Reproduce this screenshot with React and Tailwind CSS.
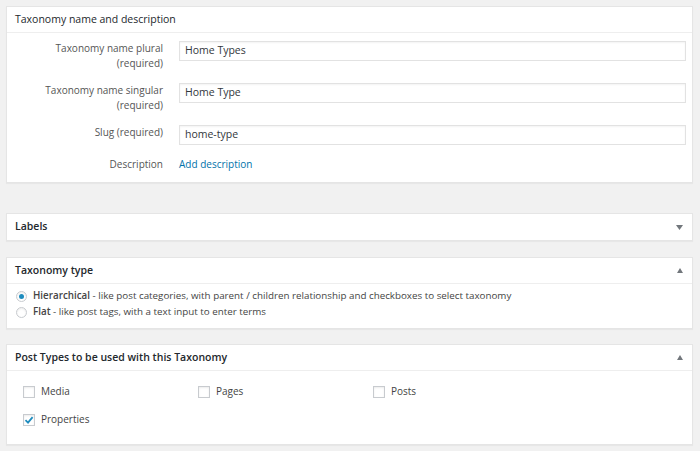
import React from "react";

const font = { fontFamily: '"Open Sans", "Noto Sans", sans-serif' };

function Panel({ title, bold = true, arrow, children, className = "" }) {
  return (
    <div className={`bg-white border border-[#e5e5e5] shadow-[0_1px_1px_rgba(0,0,0,0.04)] ${className}`}>
      <div className={`h-[26px] flex items-center justify-between pl-[8px] pr-[9px] ${children ? "border-b border-[#eeeeee]" : ""}`}>
        <span className={`text-[10.5px] text-[#23282d] ${bold ? "font-semibold" : ""}`}>{title}</span>
        {arrow === "down" && (
          <svg width="7" height="5" viewBox="0 0 7 5"><path d="M0 0h7L3.5 5z" fill="#72777c" /></svg>
        )}
        {arrow === "up" && (
          <svg width="6" height="5" viewBox="0 0 6 5"><path d="M0 5h6L3 0z" fill="#72777c" /></svg>
        )}
      </div>
      {children}
    </div>
  );
}

function Row({ label, value, mt }) {
  return (
    <div className={`flex items-start ${mt}`}>
      <div className="w-[156px] text-right text-[10px] leading-[15px] text-[#555]">{label}</div>
      <div className="ml-[16px] flex-1 h-[20px] border border-[#e2e2e2] shadow-[inset_0_1px_2px_rgba(0,0,0,0.05)] flex items-center pl-[5px] text-[10.5px] text-[#32373c]">
        {value}
      </div>
    </div>
  );
}

function Check({ label, checked }) {
  return (
    <div className="flex items-center gap-[6px]">
      <div className="w-[12px] h-[12px] border border-[#c8cbcf] bg-white shadow-[inset_0_1px_2px_rgba(0,0,0,0.08)] flex items-center justify-center">
        {checked && (
          <svg width="10" height="10" viewBox="0 0 10 10">
            <path d="M1.5 5.2 L4 7.6 L8.6 2.2" stroke="#1e8cbe" strokeWidth="1.8" fill="none" />
          </svg>
        )}
      </div>
      <span className="text-[10px] text-[#444]">{label}</span>
    </div>
  );
}

function Radio({ checked, strong, rest }) {
  return (
    <div className="flex items-center h-[16px]">
      <div className="w-[11px] h-[11px] rounded-full border border-[#c8cbcf] bg-white shadow-[inset_0_1px_2px_rgba(0,0,0,0.08)] flex items-center justify-center">
        {checked && <div className="w-[5px] h-[5px] rounded-full bg-[#1e8cbe]" />}
      </div>
      <span className="ml-[6px] text-[9.8px] text-[#444]">
        <span className="font-semibold">{strong}</span>
        {rest}
      </span>
    </div>
  );
}

export default function App() {
  return (
    <div style={font} className="w-[700px] h-[451px] bg-[#f1f1f1] pt-[6px] pl-[6px] pr-[7px] overflow-hidden">
      <Panel title="Taxonomy name and description" bold={false}>
        <div className="pt-[8px] pb-[10px] pr-[6px]">
          <Row label={<>Taxonomy name plural<br />(required)</>} value="Home Types" />
          <Row label={<>Taxonomy name singular<br />(required)</>} value="Home Type" mt="mt-[12px]" />
          <Row label="Slug (required)" value="home-type" mt="mt-[12px]" />
          <div className="flex items-start mt-[12px]">
            <div className="w-[156px] text-right text-[10px] leading-[15px] text-[#555]">Description</div>
            <a className="ml-[16px] text-[10px] leading-[15px] text-[#0073aa]">Add description</a>
          </div>
        </div>
      </Panel>

      <Panel title="Labels" arrow="down" className="mt-[30px]" />

      <Panel title="Taxonomy type" arrow="up" className="mt-[16px]">
        <div className="pt-[4px] pb-[8px] pl-[9px]">
          <Radio checked strong="Hierarchical" rest=" - like post categories, with parent / children relationship and checkboxes to select taxonomy" />
          <Radio strong="Flat" rest=" - like post tags, with a text input to enter terms" />
        </div>
      </Panel>

      <Panel title="Post Types to be used with this Taxonomy" arrow="up" className="mt-[15px]">
        <div className="pt-[13px] pb-[17px] pl-[16px] grid grid-cols-[175px_175px_175px] gap-y-[13px]">
          <Check label="Media" />
          <Check label="Pages" />
          <Check label="Posts" />
          <Check label="Properties" checked />
        </div>
      </Panel>
    </div>
  );
}
